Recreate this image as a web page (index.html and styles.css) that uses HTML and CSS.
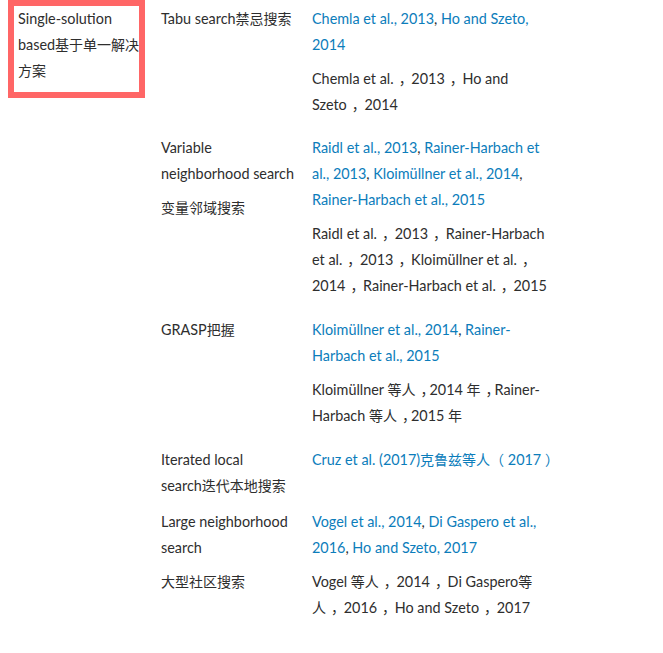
FILE: index.html
```html
<!DOCTYPE html>
<html lang="en">
<head>
<meta charset="utf-8">
<title>Single-solution based methods</title>
<link rel="stylesheet" href="styles.css">
</head>
<body>
<div class="table">
  <div class="row">
    <div class="c1 hl"><div class="hl-text">Single-solution based<span class="zh">基于单一解决方案</span></div></div>
    <div class="c2">Tabu search<span class="zh">禁忌搜索</span></div>
    <div class="c3">
      <p class="refs"><a href="#">Chemla et al., 2013</a>, <a href="#">Ho and Szeto, 2014</a></p>
      <p class="tr">Chemla et al.<span class="zp">，</span> 2013<span class="zp">，</span> Ho and Szeto<span class="zp">，</span> 2014</p>
    </div>
  </div>
  <div class="row">
    <div class="c1"></div>
    <div class="c2">
      <p>Variable neighborhood search</p>
      <p class="tr"><span class="zh">变量邻域搜索</span></p>
    </div>
    <div class="c3">
      <p class="refs"><a href="#">Raidl et al., 2013</a>, <a href="#">Rainer-Harbach et al., 2013</a>, <a href="#">Kloimüllner et al., 2014</a>, <a href="#">Rainer-Harbach et al., 2015</a></p>
      <p class="tr">Raidl et al.<span class="zp">，</span> 2013<span class="zp">，</span> Rainer-Harbach et al.<span class="zp">，</span> 2013<span class="zp">，</span> Kloimüllner et al.<span class="zp">，</span> 2014<span class="zp">，</span> Rainer-Harbach et al.<span class="zp">，</span> 2015</p>
    </div>
  </div>
  <div class="row">
    <div class="c1"></div>
    <div class="c2">GRASP<span class="zh">把握</span></div>
    <div class="c3">
      <p class="refs"><a href="#">Kloimüllner et al., 2014</a>, <a href="#">Rainer-Harbach et al., 2015</a></p>
      <p class="tr">Kloimüllner <span class="zh">等人</span><span class="zp">，</span>2014 <span class="zh">年</span><span class="zp">，</span>Rainer-Harbach <span class="zh">等人</span><span class="zp">，</span>2015 <span class="zh">年</span></p>
    </div>
  </div>
  <div class="row">
    <div class="c1"></div>
    <div class="c2">Iterated local <span class="nw">search<span class="zh">迭代本地搜索</span></span></div>
    <div class="c3">
      <p class="refs nw"><a href="#">Cruz et al. (2017)<span class="zh">克鲁兹等人（</span> 2017 <span class="zh">）</span></a></p>
    </div>
  </div>
  <div class="row">
    <div class="c1"></div>
    <div class="c2">
      <p>Large neighborhood search</p>
      <p class="tr"><span class="zh">大型社区搜索</span></p>
    </div>
    <div class="c3">
      <p class="refs"><a href="#">Vogel et al., 2014</a>, <a href="#">Di Gaspero et al., 2016</a>, <a href="#">Ho and Szeto, 2017</a></p>
      <p class="tr">Vogel <span class="zh">等人</span><span class="zp">，</span> 2014<span class="zp">，</span> Di Gaspero<span class="zh">等人</span><span class="zp">，</span> 2016<span class="zp">，</span> Ho and Szeto<span class="zp">，</span> 2017</p>
    </div>
  </div>
</div>
</body>
</html>
```

FILE: styles.css
```css
html, body {
  margin: 0;
  padding: 0;
  background: #ffffff;
}

body {
  font-family: "Lato", "Noto Sans CJK SC", sans-serif;
  font-size: 14.4px;
  line-height: 26px;
  color: #2e2e2e;
}

p {
  margin: 0;
}

a {
  color: #0c7dbb;
  text-decoration: none;
}

.zh {
  font-family: "Noto Sans CJK SC", sans-serif;
  font-size: 14px;
  line-height: 1;
}

/* full-width punctuation, nudged to sit centred in its em box */
.zp {
  font-family: "Noto Sans CJK SC", sans-serif;
  font-size: 14px;
  line-height: 1;
  padding-left: 5px;
  letter-spacing: -5px;
}

.nw {
  white-space: nowrap;
}

.table {
  padding: 6px 0 0 14px;
}

.row {
  display: grid;
  grid-template-columns: 125px 165px 252px;
  align-items: start;
  padding-bottom: 10px;
}

.row:first-child {
  padding-bottom: 9px;
}

.hl {
  padding: 0 0 8px 4px;
  outline: 6px solid #ff6666;
}

.hl-text {
  margin-right: -4px;
}

.c2 {
  padding: 0 4px 0 22px;
}

.c3 {
  padding: 0 0 0 8px;
}

.tr {
  margin: 8px 0 8px 0;
}
```
